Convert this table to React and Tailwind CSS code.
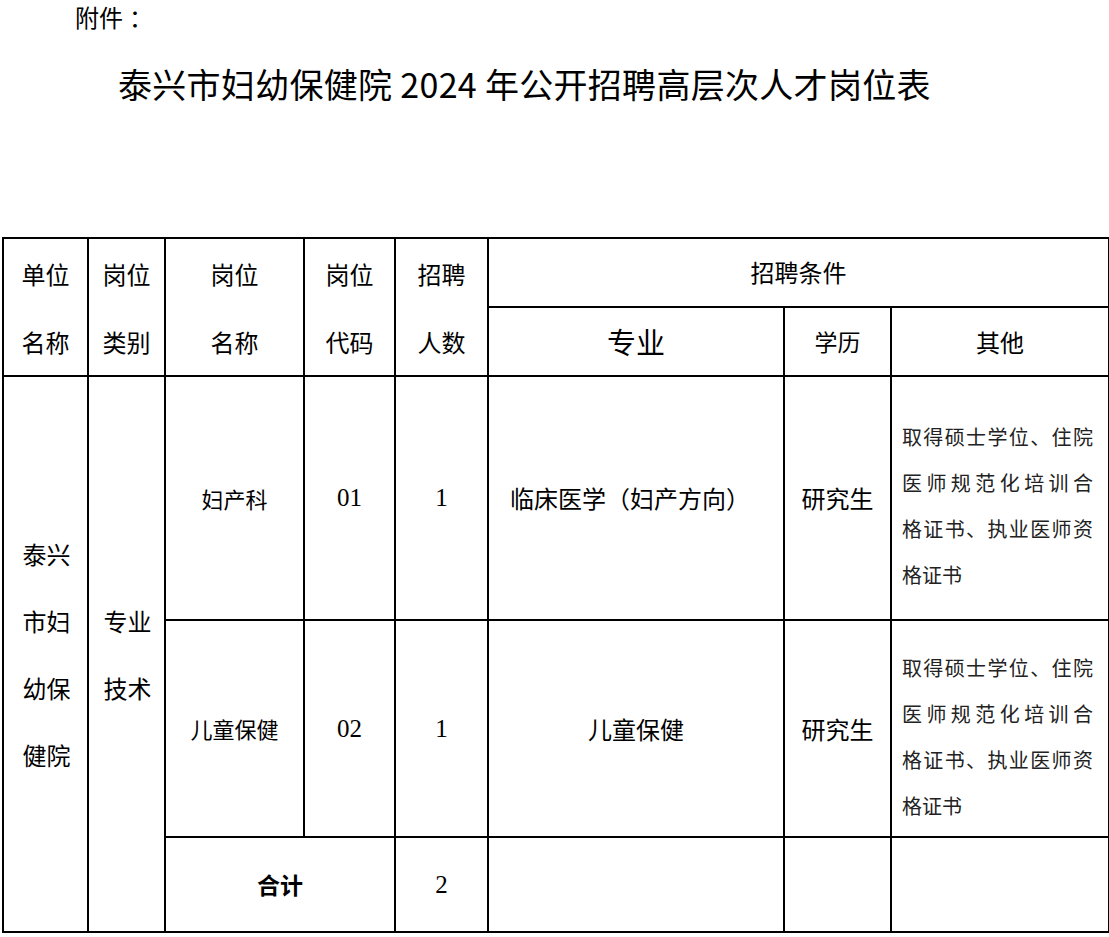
const cjk = { fontFamily: '"Noto Sans CJK SC", "Noto Sans", sans-serif' };
const serif = { fontFamily: '"Liberation Serif", "Noto Sans CJK SC", serif' };

const cell = "border-2 border-black text-center align-middle p-0";

function TwoLine({ a, b }) {
  return (
    <div className="flex flex-col items-center gap-[32px] pt-[2px]">
      <span>{a}</span>
      <span>{b}</span>
    </div>
  );
}

function Other() {
  const lines = ["取得硕士学位、住院", "医师规范化培训合", "格证书、执业医师资"];
  return (
    <div className="pl-[10px] pr-[12px] pt-[16px] text-[20px] leading-[46px] text-[#222]">
      {lines.map((l) => (
        <div key={l} className="w-[191px] text-justify [text-align-last:justify]">
          {l}
        </div>
      ))}
      <div className="text-left">格证书</div>
    </div>
  );
}

export default function App() {
  return (
    <div className="w-[1109px] min-h-[937px] bg-white text-black" style={cjk}>
      <div className="pl-[75px] pt-[2px] text-[24px] leading-[30px]">
        附件<span className="ml-[6px]">：</span>
      </div>

      <h1 className="pl-[118px] mt-[30px] text-[34px] leading-[44px] font-normal tracking-[0.3px]">
        泰兴市妇幼保健院 2024 年公开招聘高层次人才岗位表
      </h1>

      <table className="ml-[2px] mt-[131px] border-collapse table-fixed w-[1106px] text-[24px]">
        <colgroup>
          <col className="w-[85px]" />
          <col className="w-[77px]" />
          <col className="w-[139px]" />
          <col className="w-[91px]" />
          <col className="w-[93px]" />
          <col className="w-[296px]" />
          <col className="w-[107px]" />
          <col className="w-[218px]" />
        </colgroup>
        <tbody>
          <tr className="h-[69px]">
            <td rowSpan={2} className={cell}>
              <TwoLine a="单位" b="名称" />
            </td>
            <td rowSpan={2} className={cell}>
              <TwoLine a="岗位" b="类别" />
            </td>
            <td rowSpan={2} className={cell}>
              <TwoLine a="岗位" b="名称" />
            </td>
            <td rowSpan={2} className={cell}>
              <TwoLine a="岗位" b="代码" />
            </td>
            <td rowSpan={2} className={cell}>
              <TwoLine a="招聘" b="人数" />
            </td>
            <td colSpan={3} className={`${cell} pb-[2px]`}>
              招聘条件
            </td>
          </tr>
          <tr className="h-[69px]">
            <td className={`${cell} text-[29px]`}>专业</td>
            <td className={`${cell} text-[23px]`}>学历</td>
            <td className={cell}>其他</td>
          </tr>

          <tr className="h-[244px]">
            <td rowSpan={3} className={`${cell} leading-[67px]`}>
              <div className="pl-[2px]">
                泰兴
                <br />
                市妇
                <br />
                幼保
                <br />
                健院
              </div>
            </td>
            <td rowSpan={3} className={`${cell} leading-[67px]`}>
              <div className="pl-[2px]">
                专业
                <br />
                技术
              </div>
            </td>
            <td className={`${cell} text-[22px]`}>妇产科</td>
            <td className={`${cell} text-[25px]`} style={serif}>
              01
            </td>
            <td className={`${cell} text-[25px]`} style={serif}>
              1
            </td>
            <td className={`${cell} pr-[12px]`}>临床医学（妇产方向）</td>
            <td className={cell}>研究生</td>
            <td className={`${cell} text-left`}>
              <Other />
            </td>
          </tr>

          <tr className="h-[217px]">
            <td className={`${cell} text-[22px]`}>儿童保健</td>
            <td className={`${cell} text-[25px]`} style={serif}>
              02
            </td>
            <td className={`${cell} text-[25px]`} style={serif}>
              1
            </td>
            <td className={cell}>儿童保健</td>
            <td className={cell}>研究生</td>
            <td className={`${cell} text-left`}>
              <Other />
            </td>
          </tr>

          <tr className="h-[95px]">
            <td colSpan={2} className={`${cell} font-bold text-[23px]`}>
              合计
            </td>
            <td className={`${cell} text-[25px]`} style={serif}>
              2
            </td>
            <td className={cell}></td>
            <td className={cell}></td>
            <td className={cell}></td>
          </tr>
        </tbody>
      </table>
    </div>
  );
}
